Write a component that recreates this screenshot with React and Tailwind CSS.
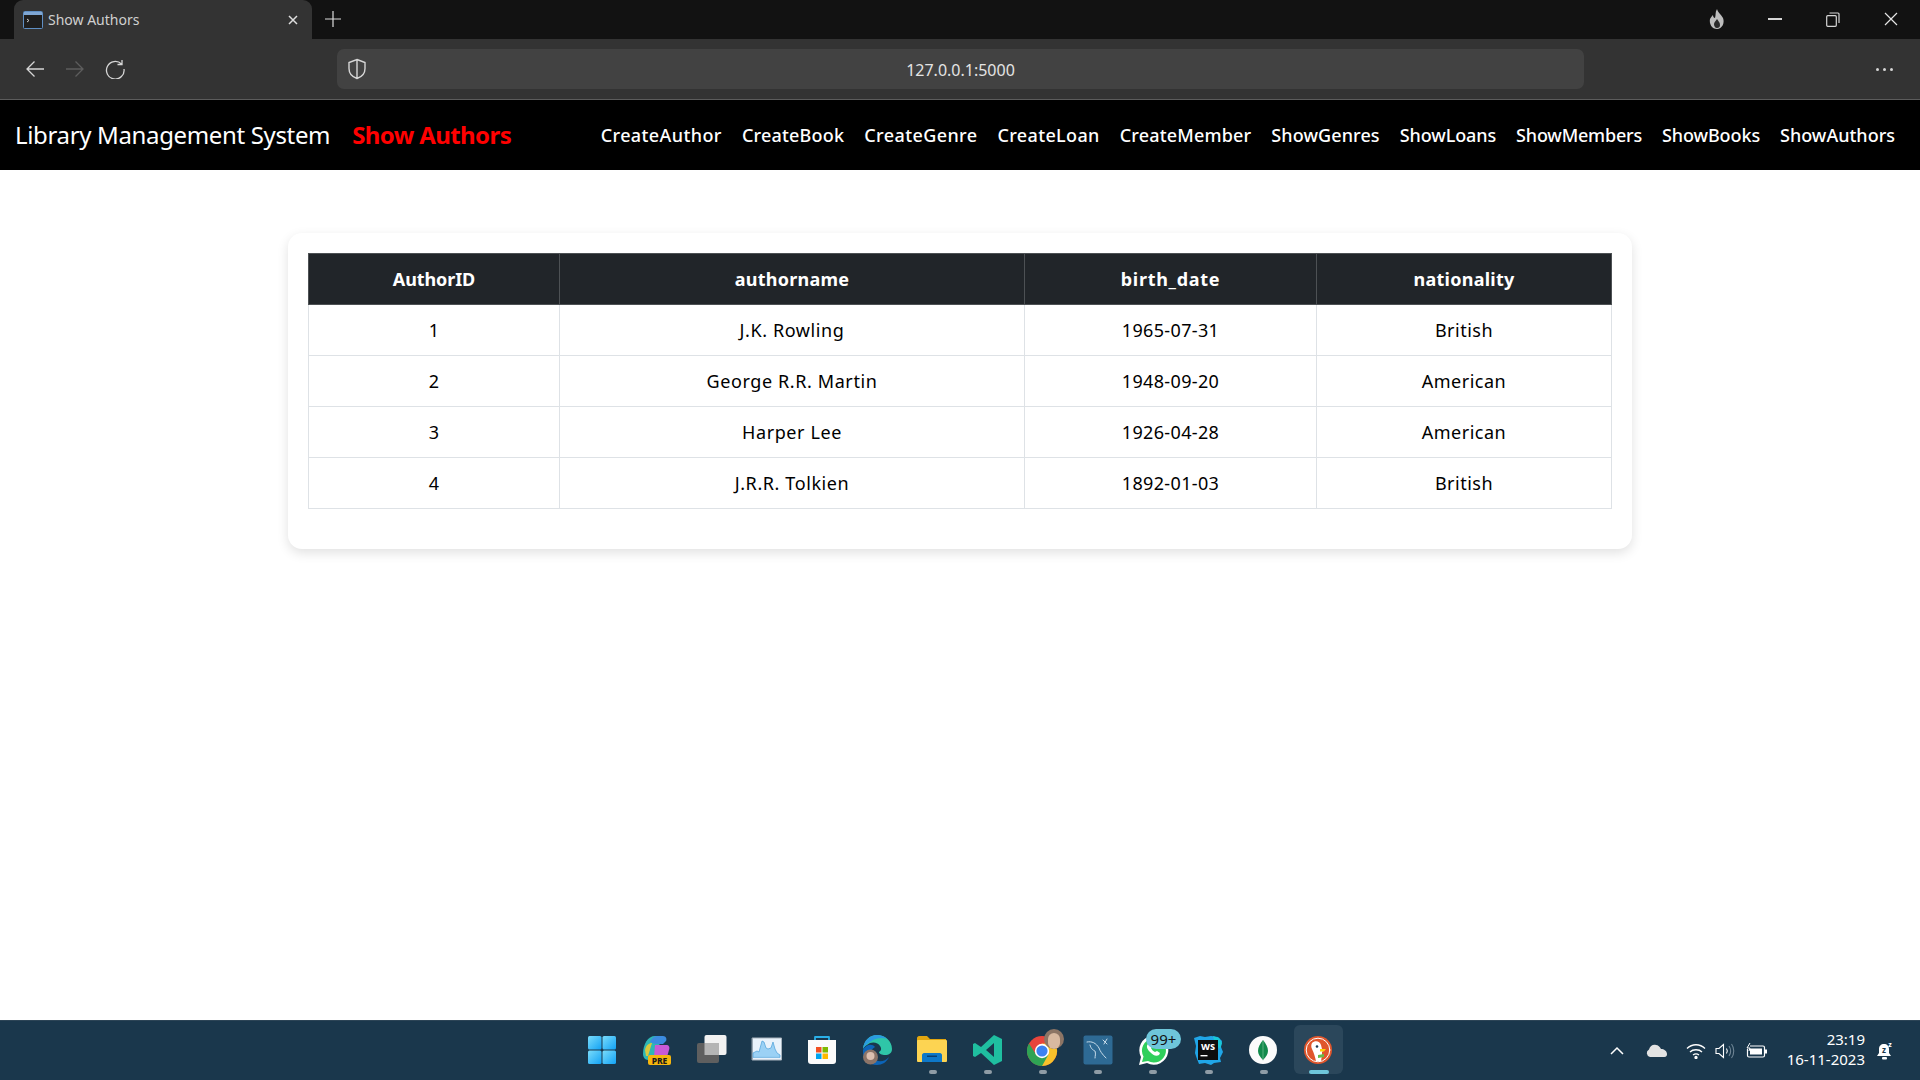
import React from "react";

const F = "font-['Noto_Sans','Open_Sans',sans-serif]";
const links = [
  ["CreateAuthor","tracking-[0.4px]"],["CreateBook","tracking-[0.2px]"],["CreateGenre","tracking-[0.4px]"],["CreateLoan","tracking-[0.35px]"],
  ["CreateMember","tracking-[0.17px]"],["ShowGenres","tracking-[0.1px]"],["ShowLoans","tracking-[-0.1px]"],["ShowMembers","tracking-[-0.2px]"],
  ["ShowBooks","tracking-[-0.1px]"],["ShowAuthors","tracking-[0px]"],
];
const rows = [
  ["1","J.K. Rowling","1965-07-31","British"],
  ["2","George R.R. Martin","1948-09-20","American"],
  ["3","Harper Lee","1926-04-28","American"],
  ["4","J.R.R. Tolkien","1892-01-03","British"],
];
const heads = [
  ["AuthorID","w-[251px] tracking-[-0.1px]"],["authorname","w-[465px] tracking-[0.25px]"],
  ["birth_date","w-[292px] tracking-[0.7px]"],["nationality","w-[295px] tracking-[0.25px]"],
];
const cellTrack = ["tracking-[0px]","tracking-[0.6px]","tracking-[0.35px]","tracking-[0.5px]"];

const S = ({ c = "none", children, size = 24, vb = "0 0 24 24", stroke, sw = 1.5 }) => (
  <svg width={size} height={size} viewBox={vb} fill={c} stroke={stroke} strokeWidth={sw} strokeLinecap="round" strokeLinejoin="round">{children}</svg>
);

const icons = [
  { k: "win", el: (
    <S size={30} vb="0 0 30 30">
      <defs><linearGradient id="w" x1="0" y1="0" x2="1" y2="1"><stop offset="0" stopColor="#7adcfb"/><stop offset="1" stopColor="#12a2f5"/></linearGradient></defs>
      <rect x="1" y="1" width="13.5" height="13.5" rx="1.5" fill="url(#w)"/><rect x="15.5" y="1" width="13.5" height="13.5" rx="1.5" fill="url(#w)"/>
      <rect x="1" y="15.5" width="13.5" height="13.5" rx="1.5" fill="url(#w)"/><rect x="15.5" y="15.5" width="13.5" height="13.5" rx="1.5" fill="url(#w)"/>
    </S>) },
  { k: "copilot", el: (
    <S size={32} vb="0 0 32 32">
      <path d="M2 20C2 10 7 2 14 2h8l-5 12-5 12H7c-3 0-5-3-5-6z" fill="#2fb7b5"/>
      <path d="M9 8c2-5 5-6 8-6h5c3 0 4 3 3 5l-3 3h-8z" fill="#3c8ce0"/>
      <path d="M14 11h11c3 0 4 2 3 5l-2 7H13z" fill="#c95ad6"/>
      <path d="M4 16c1-5 4-7 7-7l-4 13H5z" fill="#d9c93f"/>
      <rect x="7" y="21" width="23" height="10" rx="2" fill="#f6b60d"/>
      <text x="18.5" y="29.5" textAnchor="middle" fontSize="8.5" fontWeight="800" fill="#1a1a1a" fontFamily="Noto Sans">PRE</text>
    </S>) },
  { k: "task", el: (
    <S size={32} vb="0 0 32 32">
      <rect x="8.5" y="1" width="22" height="20" rx="2" fill="#f2f2f2"/>
      <rect x="1" y="9" width="22" height="20" rx="2" fill="#5f5f5f"/>
      <rect x="8.5" y="9" width="14.5" height="12" fill="#b5b5b5"/>
    </S>) },
  { k: "perf", el: (
    <S size={32} vb="0 0 32 32">
      <rect x="1.5" y="4" width="29" height="22" fill="#e9f2fb" stroke="#a8b3bd" strokeWidth="1"/>
      <path d="M2 23V19l4-2 2 1 3-11 2 1 2 6 2 1 3-1 2-6 2 7 2 4 3 2v2z" fill="#9bd1f5" stroke="#4a9fd8" strokeWidth=".7"/>
    </S>) },
  { k: "store", el: (
    <S size={30} vb="0 0 30 30">
      <path d="M8 6V2h14v4" fill="none" stroke="#2ab0e8" strokeWidth="1.8"/>
      <path d="M1 5h28v21c0 2-1 3-3 3H4c-2 0-3-1-3-3z" fill="#fbfbfb"/>
      <rect x="9" y="12" width="5.5" height="5.5" fill="#f25022"/><rect x="15.5" y="12" width="5.5" height="5.5" fill="#7fba00"/>
      <rect x="9" y="18.5" width="5.5" height="5.5" fill="#00a4ef"/><rect x="15.5" y="18.5" width="5.5" height="5.5" fill="#ffb900"/>
    </S>) },
  { k: "edge", el: (
    <S size={32} vb="0 0 32 32">
      <path d="M2 15C3 6 9 1 16 1c8 0 15 6 15 14 0 4-3 6-7 6-3 0-6-1-6-3 2-1 3-3 1-6-2-4-9-5-13-1-2 1-3 2-4 4z" fill="#2fc6a8"/>
      <path d="M2 15C3 6 9 1 16 1c4 0 7 1 10 4-5-2-12-1-17 3-3 2-6 4-7 7z" fill="#2b9be0"/>
      <path d="M2 16c2-5 9-7 12-3-4 2-5 7-2 11 4 5 12 4 16-1-2 5-7 8-12 8C8 31 1 25 2 16z" fill="#0c64b8"/>
      <circle cx="9.5" cy="23" r="7.5" fill="#8c7468"/><circle cx="9.5" cy="22" r="4" fill="#dcbfb0"/>
    </S>) },
  { k: "files", el: (
    <S size={32} vb="0 0 32 32">
      <path d="M1 4c0-1 1-2 2-2h8l3 3h16v7H1z" fill="#e2a60f"/>
      <rect x="1" y="6" width="30" height="22" rx="1" fill="#fdd452"/>
      <path d="M6 21c0-1 1-2 2-2h16c1 0 2 1 2 2v7H6z" fill="#0e78c9"/>
      <rect x="11" y="21.5" width="10" height="1.5" fill="#0a3e70"/>
    </S>), dot: true },
  { k: "code", el: (
    <S size={32} vb="0 0 32 32">
      <path d="M22 1l8 4v22l-8 4-13-12-6 4-2-1V10l2-1 6 4zM22 9l-8 7 8 7z" fill="#1fbfa0" fillRule="evenodd"/>
    </S>), dot: true },
  { k: "chrome", el: (
    <div className="relative w-8 h-8">
      <S size={32} vb="0 0 32 32">
        <circle cx="15" cy="17" r="15" fill="#e8453c"/>
        <path d="M15 32a15 15 0 0 0 13-22.5H15z" fill="#f8c12b"/>
        <path d="M2 9.5a15 15 0 0 0 13 22.5l6.5-11.5H9z" fill="#2fa354"/>
        <circle cx="15" cy="17" r="7.2" fill="#fff"/><circle cx="15" cy="17" r="5.6" fill="#3c82f0"/>
      </S>
      <span className="absolute -right-[5px] -top-[5px] w-5 h-5 rounded-full bg-[#8d7565] overflow-hidden flex items-center justify-center">
        <span className="w-3 h-4 mt-1 rounded-full bg-[#d9b9a0]" />
      </span>
    </div>), dot: true },
  { k: "mysql", el: (
    <S size={30} vb="0 0 30 30">
      <rect width="29" height="29" x=".5" y=".5" rx="2" fill="#2e6a94"/>
      <path d="M4 7c5-1 9 1 12 6 1 3 3 6 7 10M7 10c1 4 3 5 5 6 1 3 0 5 0 7M20 5l4 4M24 4l-3 5" fill="none" stroke="#c8dcea" strokeWidth="1"/>
    </S>), dot: true },
  { k: "wa", el: (
    <div className="relative w-8 h-8">
      <S size={32} vb="0 0 32 32">
        <path d="M2 31l2-8A14.500 14.500 0 1 1 10 29z" fill="#fff"/>
        <path d="M5 28l1.500-5.500A12 12 0 1 1 11 27z" fill="#2fcf5b"/>
        <path d="M11 10c-2 2-1 5 2 8s6 5 9 3l1-2-3-2-2 1c-2-1-3-2-4-4l1-2-2-3z" fill="#fff"/>
      </S>
      <span className={`absolute left-[9px] -top-[5px] w-[35px] h-[20px] rounded-[10px] bg-[#6ec6da] text-[15px] leading-[20px] text-center text-[#111] ${F}`}>99+</span>
    </div>), dot: true },
  { k: "ws", el: (
    <S size={30} vb="0 0 30 30">
      <path d="M1 3l6-2 5 1 6-1 7 1 4 4-1 6 2 5-3 6 1 4-7 1-3 2-6-2-6 1-2-5-2-6 1-7z" fill="#20a6e8"/>
      <path d="M20 1l6 2 3 5-2 6-5-5z" fill="#18c9d8"/>
      <rect x="5" y="5" width="20" height="20" fill="#0d0d0d"/>
      <text x="15" y="15" textAnchor="middle" fontSize="9" fontWeight="800" fill="#fff" fontFamily="Noto Sans">WS</text>
      <rect x="7.500" y="20" width="7" height="1.400" fill="#fff"/>
    </S>), dot: true },
  { k: "mongo", el: (
    <S size={30} vb="0 0 30 30">
      <circle cx="15" cy="15" r="14" fill="#fbfbfb"/>
      <path d="M15 5c3 4 5 7 5 11 0 3-2 6-5 9-3-3-5-6-5-9 0-4 2-7 5-11z" fill="#128a4b"/>
      <path d="M15 6v19" stroke="#8ac9a5" strokeWidth=".6"/>
    </S>), dot: true },
  { k: "ddg", active: true, el: (
    <S size={30} vb="0 0 30 30">
      <circle cx="15" cy="15" r="14" fill="#e0562c"/>
      <circle cx="15" cy="15" r="11.800" fill="none" stroke="#fff" strokeWidth="1"/>
      <path d="M9 8c3-3 8-2 9 2l1 4 2 1-2 2v3l-1 6h-5c-1-4-2-8-4-12-1-2-1-4 0-6z" fill="#fff"/>
      <circle cx="14" cy="11.500" r="1.300" fill="#1d3a55"/>
      <path d="M17 14h6l-2 2.500h-4z" fill="#fdd20a"/>
      <path d="M15 20l6-1v3l-6 1z" fill="#65bc46"/>
    </S>) },
];

export default function App() {
  return (
    <div className="w-full h-screen flex flex-col overflow-hidden bg-white">
      {/* tab strip */}
      <div className={`h-[39px] bg-[#121212] flex items-end ${F}`}>
        <div className="ml-[14px] w-[298px] h-[39px] bg-[#333333] rounded-t-[9px] flex items-center pl-[9px] pr-[13px]">
          <svg width="20" height="18" viewBox="0 0 20 18" className="mr-[5px] shrink-0">
            <rect x=".5" y=".5" width="19" height="17" rx="1" fill="#1e1e1e" stroke="#5f8fc4" />
            <rect x="1" y="1" width="18" height="3" fill="#7fa7d4" />
            <path d="M4 8l2 1.500L4 11" stroke="#ccc" fill="none" strokeWidth="1" />
          </svg>
          <span className="text-[14px] text-[#d0d0d0] flex-1 leading-none">Show Authors</span>
          <svg width="12" height="12" viewBox="0 0 12 12" stroke="#dedede" strokeWidth="1.500"><path d="M2 2l8 8M10 2l-8 8" /></svg>
        </div>
        <div className="h-[39px] flex items-center ml-[12px] pb-[2px]">
          <svg width="18" height="18" viewBox="0 0 18 18" stroke="#dcdcdc" strokeWidth="1.200"><path d="M9 1v16M1 9h16" /></svg>
        </div>
        <div className="flex-1" />
        <div className="h-[39px] flex items-center pb-[1px]">
          <svg width="18" height="22" viewBox="0 0 18 22" className="mr-[42px]">
            <path d="M9 1c1 4 4 5 6 9 2 5-1 11-6 11S1 16 2 11c1-2 2-3 3-4 0 2 1 3 2 3 1-3 0-6 2-9z" fill="#bdbdbd" />
            <path d="M9 11c1 2 3 3 3 6 0 2-1 3-3 3s-3-2-3-4 2-3 3-5z" fill="#2a2a2a" />
          </svg>
          <div className="w-[14px] h-[2px] bg-[#d5d5d5] mr-[44px]" />
          <svg width="14" height="15" viewBox="0 0 14 15" fill="none" stroke="#d5d5d5" strokeWidth="1.200" className="mr-[44px]">
            <rect x=".7" y="3.700" width="9.600" height="10.600" rx="1" /><path d="M3.500 1h8.500c.7 0 1 .3 1 1v9" />
          </svg>
          <svg width="14" height="14" viewBox="0 0 14 14" stroke="#e5e5e5" strokeWidth="1.200" className="mr-[22px]"><path d="M1 1l12 12M13 1L1 13" /></svg>
        </div>
      </div>
      {/* toolbar */}
      <div className={`h-[61px] bg-[#333333] border-b border-[#5c5c5c] flex items-center relative ${F}`}>
        <div className="flex items-center gap-[20px] ml-[25px] w-[312px]">
          <svg width="20" height="20" viewBox="0 0 20 20" fill="none" stroke="#d6d6d6" strokeWidth="1.300"><path d="M19 10H2M9.500 2.500L2 10l7.500 7.500" /></svg>
          <svg width="20" height="20" viewBox="0 0 20 20" fill="none" stroke="#5d5d5d" strokeWidth="1.300"><path d="M1 10h17M10.500 2.500L18 10l-7.500 7.500" /></svg>
          <svg width="20" height="20" viewBox="0 0 20 20" fill="none" stroke="#d6d6d6" strokeWidth="1.300"><path d="M16.500 5A8.800 8.800 0 1 0 19 10M17 1v4.500h-4.500" /></svg>
        </div>
        <div className="w-[1247px] h-[40px] rounded-[7px] bg-[#424242] flex items-center relative px-[10px]">
          <svg width="20" height="22" viewBox="0 0 20 22" fill="none" stroke="#d6d6d6" strokeWidth="1.400"><path d="M10 1.500l8 3v6c0 5-3.500 8.500-8 10-4.500-1.500-8-5-8-10v-6zM10 1.500v19" /></svg>
          <span className="flex-1 text-center text-[16px] text-[#e4e4e4] pr-[20px] pt-[1px]">127.0.0.1:5000</span>
        </div>
        <div className="flex-1 flex justify-end pr-[27px] gap-[4px]">
          <span className="w-[3px] h-[3px] rounded-full bg-[#d6d6d6]" />
          <span className="w-[3px] h-[3px] rounded-full bg-[#d6d6d6]" />
          <span className="w-[3px] h-[3px] rounded-full bg-[#d6d6d6]" />
        </div>
      </div>
      {/* navbar */}
      <nav className={`h-[70px] bg-black flex items-center pl-[15px] pr-[25px] ${F}`}>
        <span className="text-[24px] tracking-[-0.35px] text-white mr-[22px] whitespace-nowrap">Library Management System</span>
        <span className="text-[24px] tracking-[-0.6px] font-bold text-[#ff0000] whitespace-nowrap">Show Authors</span>
        <div className="ml-auto flex gap-[20px]">
          {links.map(([l, t]) => <a key={l} className={`text-[18px] font-medium text-white whitespace-nowrap ${t}`}>{l}</a>)}
        </div>
      </nav>
      {/* content */}
      <main className={`flex-1 pt-[63px] ${F}`}>
        <div className="w-[1344px] mx-auto rounded-[14px] bg-white p-[20px] pb-[40px] shadow-[0_4px_12px_rgba(0,0,0,0.12)]">
          <table className="w-[1303px] table-fixed border-collapse text-[18px] leading-[27px] text-black text-center">
            <thead>
              <tr className="bg-[#212529] text-white">
                {heads.map(([h, w]) => (
                  <th key={h} className={`${w} h-[51px] p-0 font-bold border border-[#4d5154]`}>{h}</th>
                ))}
              </tr>
            </thead>
            <tbody>
              {rows.map((r) => (
                <tr key={r[0]}>
                  {r.map((c, i) => <td key={i} className={`h-[51px] p-0 border border-[#dee2e6] ${cellTrack[i]}`}>{c}</td>)}
                </tr>
              ))}
            </tbody>
          </table>
        </div>
      </main>
      {/* taskbar */}
      <footer className={`h-[60px] bg-[#1a374c] border-t border-[#2c4456] grid grid-cols-[1fr_772px_1fr] ${F}`}>
        <div />
        <div className="flex items-start pt-[4px]">
          {icons.map((ic) => (
            <div key={ic.k} className="relative w-[55.15px] h-[50px] flex items-center justify-center">
              {ic.active && <span className="absolute left-[3px] top-0 w-[49px] h-[49px] rounded-[6px] bg-[#2b475b]" />}
              <span className="relative">{ic.el}</span>
              {ic.dot && <span className="absolute left-[24px] bottom-[1px] w-[8px] h-[4px] rounded-full bg-[#8f9ca6]" />}
              {ic.active && <span className="absolute left-[18px] bottom-[1px] w-[20px] h-[4px] rounded-full bg-[#6ec6da]" />}
            </div>
          ))}
        </div>
        <div className="flex items-center justify-end text-white pr-[27px]">
          <svg width="14" height="9" viewBox="0 0 14 9" fill="none" stroke="#fff" strokeWidth="1.500" className="mr-[22px]"><path d="M1 8l6-6 6 6" /></svg>
          <svg width="21" height="13" viewBox="0 0 21 13" className="mr-[19px]"><path d="M4 13a4 4 0 0 1-1-7.500C4 2 7 0 10 1c2 0 4 2 5 4 3 0 6 2 6 5s-2 3-4 3z" fill="#e3e3e3" /></svg>
          <svg width="20" height="16" viewBox="0 0 20 16" fill="none" stroke="#fff" strokeWidth="1.300" className="mr-[9px]"><path d="M1 5.500c5-5 13-5 18 0M4 9c3-3 9-3 12 0M7 12c2-1.500 4-1.500 6 0" /><circle cx="10" cy="14.500" r="1" fill="#fff" /></svg>
          <svg width="20" height="16" viewBox="0 0 20 16" fill="none" stroke="#fff" strokeWidth="1.100" className="mr-[11px]"><path d="M1 5.500h3L8.500 1.500v13L4 10.500H1z" /><path d="M11.500 5.500c1 1.500 1 3.500 0 5" /><path d="M14 3c2 3 2 7 0 10M16.500 1c3 4 3 10 0 14" stroke="#6f8595" /></svg>
          <svg width="21" height="16" viewBox="0 0 21 16" fill="none" className="mr-[20px]"><path d="M4 3h13c1 0 1.500.5 1.500 1.500v8c0 1-.5 1.500-1.500 1.500H3c-1 0-1.500-.5-1.500-1.500V6" stroke="#fff" strokeWidth="1.200" /><rect x="4" y="5.500" width="12" height="6" fill="#fff" /><rect x="19" y="6.500" width="2" height="4" fill="#fff" /><path d="M4 0L1 5h3L3 8" stroke="#fff" strokeWidth="1" /></svg>
          <div className="text-right text-[15px] leading-[20px] text-white mr-[11px] pb-[3px] whitespace-nowrap">
            <div>23:19</div>
            <div>16-11-2023</div>
          </div>
          <svg width="17" height="20" viewBox="0 0 17 20"><path d="M8 3c-3 0-5 2-5 5v4l-2 3h14l-2-3V8c0-3-2-5-5-5z" fill="#fff" /><rect x="6" y="16" width="5" height="2.500" rx="1" fill="#fff" /><text x="8" y="12" textAnchor="middle" fontSize="8" fontWeight="700" fill="#1a374c" fontFamily="Noto Sans">z</text><text x="14" y="6" textAnchor="middle" fontSize="7" fontWeight="700" fill="#fff" fontFamily="Noto Sans">z</text></svg>
        </div>
      </footer>
    </div>
  );
}
